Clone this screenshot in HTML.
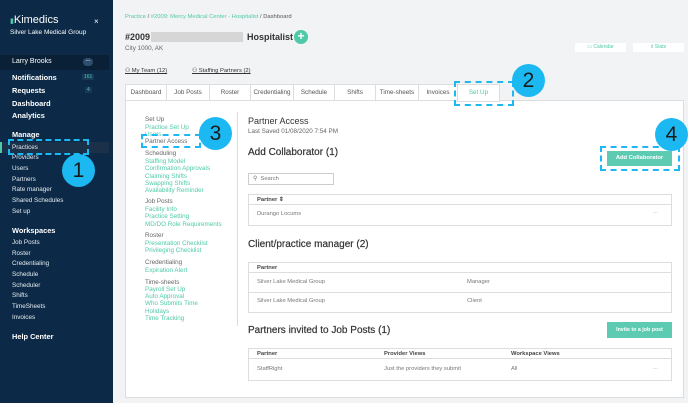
<!DOCTYPE html>
<html><head><meta charset="utf-8"><style>
*{margin:0;padding:0;box-sizing:border-box}
body{width:688px;height:403px;overflow:hidden;background:#f2f3f5;font-family:"Liberation Sans",sans-serif;position:relative}
.a{position:absolute;white-space:nowrap}
#sb{position:absolute;left:0;top:0;width:113px;height:403px;background:#0c2a47;color:#fff}
.s{position:absolute;left:12px;font-size:6.3px;color:#e6ecf2}
.b{position:absolute;left:12px;font-size:7.4px;font-weight:bold;color:#fff}
.g{color:#4fc9a8}
.sn{position:absolute;left:145px;font-size:6.3px;color:#4fc9a8}
.sh{position:absolute;left:145px;font-size:6.3px;color:#666}
.circ{position:absolute;width:33px;height:33px;border-radius:50%;background:#1cb8f2;color:#1a1a1a;font-size:21px;text-align:center;line-height:33px}
.dash{position:absolute;border:2.5px dashed #1cb8f2}
.tab{position:absolute;top:84px;height:17px;border:1px solid #ddd;border-right:none;background:#fff;font-size:6.3px;color:#555;text-align:center;line-height:15px}
.tbl{position:absolute;left:248px;width:424px;border:1px solid #ddd;background:#fff}
.th{font-size:5.8px;font-weight:bold;color:#444;padding-left:8px}
.td{font-size:5.8px;color:#777;position:absolute}
.btn{position:absolute;background:#5ccbb2;color:#fff;font-size:5.8px;font-weight:bold;text-align:center}
h3{position:absolute;font-size:10px;font-weight:normal;color:#333;white-space:nowrap;-webkit-text-stroke:0.2px #333}
</style></head><body>
<div id="sb">
<div class="a" style="left:10px;top:14px;font-size:11px;color:#fff"><span style="color:#4fc9a8;font-size:7px">▮</span>Kimedics</div>
<div class="a" style="left:94px;top:17px;font-size:8px">×</div>
<div class="a" style="left:10px;top:29px;font-size:6.5px">Silver Lake Medical Group</div>
<div class="a" style="left:0;top:55px;width:109px;height:15px;background:#0a2036"></div>
<div class="a" style="left:12px;top:58px;font-size:7px">Larry Brooks</div>
<div class="a" style="left:83px;top:58px;width:10px;height:8px;border-radius:4px;background:#2d4e6e;font-size:6px;text-align:center;line-height:5px">...</div>
<div class="b" style="top:73px">Notifications</div><div class="a" style="left:82px;top:74px;font-size:5px;color:#4fc9a8;background:#173a58;padding:0 2px">161</div>
<div class="b" style="top:86px">Requests</div><div class="a" style="left:85px;top:87px;font-size:5px;color:#4fc9a8;background:#173a58;padding:0 2px">4</div>
<div class="b" style="top:99px">Dashboard</div>
<div class="b" style="top:111px">Analytics</div>
<div class="b" style="top:130px">Manage</div>
<div class="a" style="left:0;top:142px;width:109px;height:11px;background:#1a3149;border-left:2px solid #4fc9a8"></div>
<div class="s" style="top:144px">Practices</div>
<div class="s" style="top:154px">Providers</div>
<div class="s" style="top:165px">Users</div>
<div class="s" style="top:176px">Partners</div>
<div class="s" style="top:186px">Rate manager</div>
<div class="s" style="top:197px">Shared Schedules</div>
<div class="s" style="top:208px">Set up</div>
<div class="b" style="top:226px">Workspaces</div>
<div class="s" style="top:239px">Job Posts</div>
<div class="s" style="top:250px">Roster</div>
<div class="s" style="top:260px">Credentialing</div>
<div class="s" style="top:271px">Schedule</div>
<div class="s" style="top:282px">Scheduler</div>
<div class="s" style="top:292px">Shifts</div>
<div class="s" style="top:303px">TimeSheets</div>
<div class="s" style="top:314px">Invoices</div>
<div class="b" style="top:332px">Help Center</div>
</div>
<div class="dash" style="left:8px;top:139px;width:81px;height:16px"></div>
<div class="circ" style="left:62px;top:154px">1</div>

<div class="a" style="left:125px;top:14px;font-size:5.8px;color:#555"><span class="g">Practice</span> / <span class="g">#2009: Mercy Medical Center - Hospitalist</span> / Dashboard</div>
<div class="a" style="left:125px;top:32px;font-size:9px;font-weight:bold;color:#333">#2009</div>
<div class="a" style="left:151px;top:32px;width:92px;height:10px;background:#d6d6d6"></div>
<div class="a" style="left:247px;top:32px;font-size:9px;font-weight:bold;color:#333">Hospitalist</div>
<div class="a" style="left:294px;top:30px;width:14px;height:14px;border-radius:50%;background:#4fc9a8;color:#fff;font-size:12px;font-weight:bold;text-align:center;line-height:13px">+</div>
<div class="a" style="left:125px;top:45px;font-size:6.3px;color:#666">City 1000, AK</div>
<div class="a" style="left:575px;top:43px;width:51px;height:9px;background:#fff;font-size:5px;color:#4fc9a8;text-align:center;line-height:9px">▭ Calendar</div>
<div class="a" style="left:633px;top:43px;width:51px;height:9px;background:#fff;font-size:5px;color:#4fc9a8;text-align:center;line-height:9px">ıl Stats</div>
<div class="a" style="left:125px;top:68px;font-size:5.8px;color:#333;text-decoration:underline">⚇ My Team (12)</div>
<div class="a" style="left:192px;top:68px;font-size:5.8px;color:#333;text-decoration:underline">⚇ Staffing Partners (2)</div>

<div class="tab" style="left:125px;width:41px">Dashboard</div>
<div class="tab" style="left:166px;width:43px">Job Posts</div>
<div class="tab" style="left:209px;width:41px">Roster</div>
<div class="tab" style="left:250px;width:43px">Credentialing</div>
<div class="tab" style="left:293px;width:41px">Schedule</div>
<div class="tab" style="left:334px;width:41px">Shifts</div>
<div class="tab" style="left:375px;width:43px">Time-sheets</div>
<div class="tab" style="left:418px;width:39px">Invoices</div>
<div class="tab" style="left:457px;width:43px;border-right:1px solid #ddd;color:#4fc9a8;height:18px;z-index:2">Set Up</div>
<div class="a" style="left:125px;top:100px;width:559px;height:298px;background:#fff;border:1px solid #ddd"></div>
<div class="dash" style="left:454px;top:81px;width:60px;height:25px;z-index:3"></div>
<div class="circ" style="left:512px;top:64px;z-index:4">2</div>

<div class="a" style="left:237px;top:112px;width:1px;height:214px;background:#ddd"></div>
<div class="sh" style="top:116px">Set Up</div>
<div class="sn" style="top:124px">Practice Set Up</div>
<div class="sn" style="top:131px">Users</div>
<div class="sh" style="top:138px;background:#fff">Partner Access</div>
<div class="sh" style="top:150px">Scheduling</div>
<div class="sn" style="top:158px">Staffing Model</div>
<div class="sn" style="top:165px">Confirmation Approvals</div>
<div class="sn" style="top:173px">Claiming Shifts</div>
<div class="sn" style="top:180px">Swapping Shifts</div>
<div class="sn" style="top:187px">Availability Reminder</div>
<div class="sh" style="top:198px">Job Posts</div>
<div class="sn" style="top:206px">Facility Info</div>
<div class="sn" style="top:213px">Practice Setting</div>
<div class="sn" style="top:221px">MD/DO Role Requirements</div>
<div class="sh" style="top:232px">Roster</div>
<div class="sn" style="top:240px">Presentation Checklist</div>
<div class="sn" style="top:247px">Privileging Checklist</div>
<div class="sh" style="top:259px">Credentialing</div>
<div class="sn" style="top:267px">Expiration Alert</div>
<div class="sh" style="top:279px">Time-sheets</div>
<div class="sn" style="top:286px">Payroll Set Up</div>
<div class="sn" style="top:293px">Auto Approval</div>
<div class="sn" style="top:300px">Who Submits Time</div>
<div class="sn" style="top:308px">Holidays</div>
<div class="sn" style="top:315px">Time Tracking</div>
<div class="dash" style="left:141px;top:134px;width:60px;height:14px"></div>
<div class="circ" style="left:199px;top:117px">3</div>

<div class="a" style="left:248px;top:116px;font-size:9px;color:#333">Partner Access</div>
<div class="a" style="left:248px;top:128px;font-size:6.3px;color:#666">Last Saved 01/08/2020 7:54 PM</div>
<h3 style="left:248px;top:147px">Add Collaborator (1)</h3>
<div class="a" style="left:248px;top:173px;width:86px;height:12px;border:1px solid #ccc;font-size:5.8px;color:#777;padding:2px 0 0 4px">⚲ &nbsp;Search</div>
<div class="btn" style="left:607px;top:151px;width:65px;height:15px;line-height:15px">Add Collaborator</div>
<div class="dash" style="left:600px;top:146px;width:80px;height:25px"></div>
<div class="circ" style="left:655px;top:118px">4</div>

<div class="tbl" style="top:194px;height:32px"><div class="th" style="height:10px;line-height:10px;border-bottom:1px solid #ddd">Partner ⇕</div><div class="td" style="left:8px;top:16px">Durango Locums</div><div class="td" style="left:404px;top:14px;color:#4fc9a8">...</div></div>
<h3 style="left:248px;top:239px">Client/practice manager (2)</h3>
<div class="tbl" style="top:262px;height:51px"><div class="th" style="height:10px;line-height:10px;border-bottom:1px solid #ddd">Partner</div><div class="td" style="left:8px;top:16px">Silver Lake Medical Group</div><div class="td" style="left:218px;top:16px">Manager</div><div class="a" style="left:0;top:29px;width:422px;height:1px;background:#ddd"></div><div class="td" style="left:8px;top:35px">Silver Lake Medical Group</div><div class="td" style="left:218px;top:35px">Client</div></div>
<h3 style="left:248px;top:325px">Partners invited to Job Posts (1)</h3>
<div class="btn" style="left:607px;top:322px;width:65px;height:16px;line-height:16px;font-size:5.3px">Invite to a job post</div>
<div class="tbl" style="top:348px;height:33px"><div class="th" style="height:10px;line-height:10px;border-bottom:1px solid #ddd">Partner<span style="position:absolute;left:135px">Provider Views</span><span style="position:absolute;left:262px">Workspace Views</span></div><div class="td" style="left:8px;top:17px">StaffRight</div><div class="td" style="left:135px;top:17px">Just the providers they submit</div><div class="td" style="left:262px;top:17px">All</div><div class="td" style="left:404px;top:16px;color:#4fc9a8">...</div></div>
</body></html>
